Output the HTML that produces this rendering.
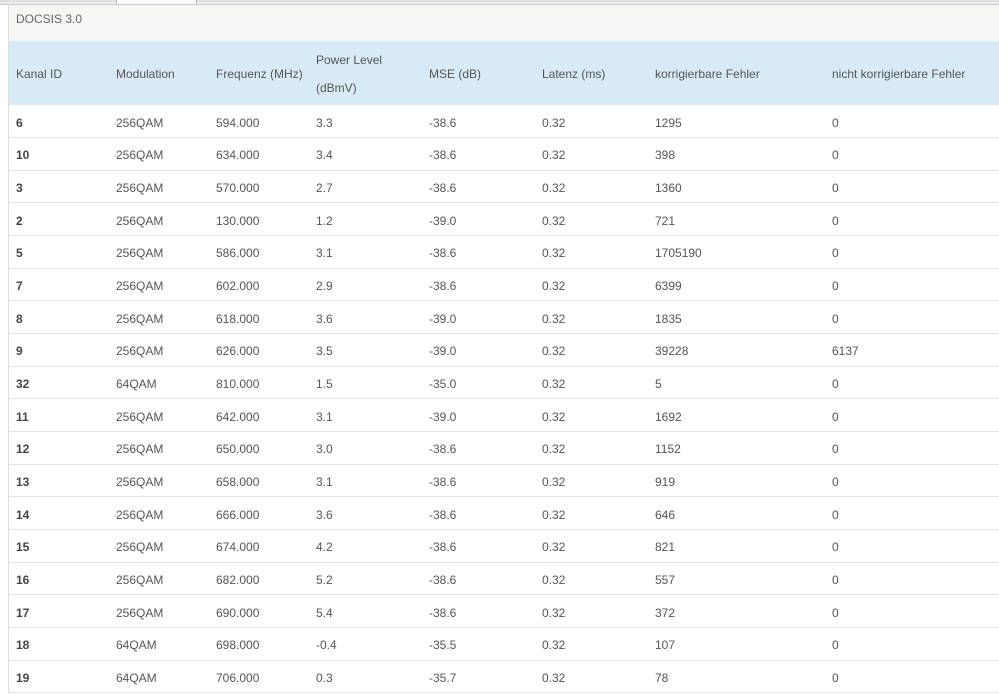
<!DOCTYPE html>
<html><head><meta charset="utf-8"><style>
body{margin:0;width:999px;height:694px;overflow:hidden;background:#fff;font-family:"Liberation Sans",sans-serif;font-size:12px;color:#555;position:relative}
.top{position:absolute;left:0;top:0;width:999px;height:4px;background:linear-gradient(#ddd,#eee);border-bottom:1px solid #ccc}
.tab{position:absolute;left:116px;top:0;width:79px;height:4px;background:#fafafa;border-left:1px solid #bbb;border-right:1px solid #bbb}
.panel{position:absolute;left:8px;top:5px;width:991px;border-left:1px solid #ddd}
.title{height:36px;background:#f6f6f4;line-height:28px;padding-left:7px;color:#666;font-size:12px}
table{border-collapse:collapse;width:991px;table-layout:fixed}
th{background:#d9eaf7;font-weight:normal;text-align:left;height:64px;padding:2px 0 0 7px;color:#555;line-height:28px;vertical-align:middle;box-sizing:border-box}
td{height:32.67px;padding:3px 0 0 7px;border-bottom:1px solid #e4e4e4;box-sizing:border-box}
td:first-child{font-weight:bold;color:#444}
</style></head><body>
<div class="top"></div><div class="tab"></div>
<div class="panel"><div class="title">DOCSIS 3.0</div>
<table><colgroup><col style="width:100px"><col style="width:100px"><col style="width:100px"><col style="width:113px"><col style="width:113px"><col style="width:113px"><col style="width:177px"><col></colgroup>
<tr><th>Kanal ID</th><th>Modulation</th><th>Frequenz (MHz)</th><th>Power Level<br>(dBmV)</th><th>MSE (dB)</th><th>Latenz (ms)</th><th>korrigierbare Fehler</th><th>nicht korrigierbare Fehler</th></tr>
<tr><td>6</td><td>256QAM</td><td>594.000</td><td>3.3</td><td>-38.6</td><td>0.32</td><td>1295</td><td>0</td></tr>
<tr><td>10</td><td>256QAM</td><td>634.000</td><td>3.4</td><td>-38.6</td><td>0.32</td><td>398</td><td>0</td></tr>
<tr><td>3</td><td>256QAM</td><td>570.000</td><td>2.7</td><td>-38.6</td><td>0.32</td><td>1360</td><td>0</td></tr>
<tr><td>2</td><td>256QAM</td><td>130.000</td><td>1.2</td><td>-39.0</td><td>0.32</td><td>721</td><td>0</td></tr>
<tr><td>5</td><td>256QAM</td><td>586.000</td><td>3.1</td><td>-38.6</td><td>0.32</td><td>1705190</td><td>0</td></tr>
<tr><td>7</td><td>256QAM</td><td>602.000</td><td>2.9</td><td>-38.6</td><td>0.32</td><td>6399</td><td>0</td></tr>
<tr><td>8</td><td>256QAM</td><td>618.000</td><td>3.6</td><td>-39.0</td><td>0.32</td><td>1835</td><td>0</td></tr>
<tr><td>9</td><td>256QAM</td><td>626.000</td><td>3.5</td><td>-39.0</td><td>0.32</td><td>39228</td><td>6137</td></tr>
<tr><td>32</td><td>64QAM</td><td>810.000</td><td>1.5</td><td>-35.0</td><td>0.32</td><td>5</td><td>0</td></tr>
<tr><td>11</td><td>256QAM</td><td>642.000</td><td>3.1</td><td>-39.0</td><td>0.32</td><td>1692</td><td>0</td></tr>
<tr><td>12</td><td>256QAM</td><td>650.000</td><td>3.0</td><td>-38.6</td><td>0.32</td><td>1152</td><td>0</td></tr>
<tr><td>13</td><td>256QAM</td><td>658.000</td><td>3.1</td><td>-38.6</td><td>0.32</td><td>919</td><td>0</td></tr>
<tr><td>14</td><td>256QAM</td><td>666.000</td><td>3.6</td><td>-38.6</td><td>0.32</td><td>646</td><td>0</td></tr>
<tr><td>15</td><td>256QAM</td><td>674.000</td><td>4.2</td><td>-38.6</td><td>0.32</td><td>821</td><td>0</td></tr>
<tr><td>16</td><td>256QAM</td><td>682.000</td><td>5.2</td><td>-38.6</td><td>0.32</td><td>557</td><td>0</td></tr>
<tr><td>17</td><td>256QAM</td><td>690.000</td><td>5.4</td><td>-38.6</td><td>0.32</td><td>372</td><td>0</td></tr>
<tr><td>18</td><td>64QAM</td><td>698.000</td><td>-0.4</td><td>-35.5</td><td>0.32</td><td>107</td><td>0</td></tr>
<tr><td>19</td><td>64QAM</td><td>706.000</td><td>0.3</td><td>-35.7</td><td>0.32</td><td>78</td><td>0</td></tr>
</table></div>
</body></html>
